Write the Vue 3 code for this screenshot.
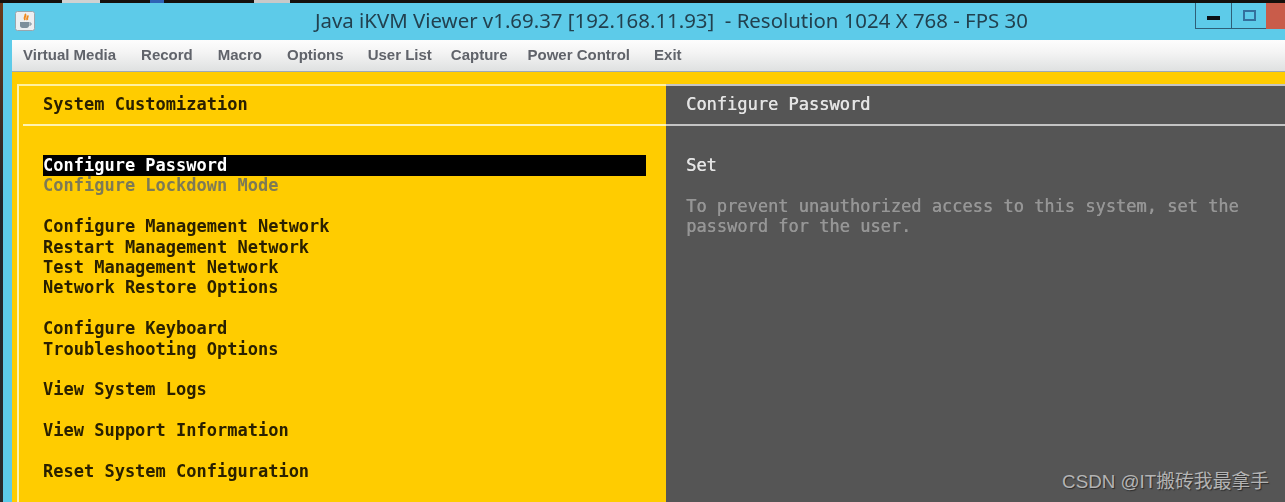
<script setup>
const menus = [
  { t: 'Virtual Media', c: '' },
  { t: 'Record', c: '' },
  { t: 'Macro', c: '' },
  { t: 'Options', c: 'near' },
  { t: 'User List', c: 'tight' },
  { t: 'Capture', c: 'snug' },
  { t: 'Power Control', c: 'near' },
  { t: 'Exit', c: '' }
]
const rows = [
  { t: 'Configure Password', c: 'sel' },
  { t: 'Configure Lockdown Mode', c: 'dim' },
  { t: '' },
  { t: 'Configure Management Network' },
  { t: 'Restart Management Network' },
  { t: 'Test Management Network' },
  { t: 'Network Restore Options' },
  { t: '' },
  { t: 'Configure Keyboard' },
  { t: 'Troubleshooting Options' },
  { t: '' },
  { t: 'View System Logs' },
  { t: '' },
  { t: 'View Support Information' },
  { t: '' },
  { t: 'Reset System Configuration' }
]
</script>

<template>
  <div class="page">
    <div class="desktop-strip">
      <span class="seg s1"></span><span class="seg s2"></span><span class="seg s3"></span>
    </div>
    <div class="window-wrap">
      <div class="desktop-edge"></div>
      <div class="window">
        <div class="titlebar">
          <svg class="app-icon" width="20" height="20" viewBox="0 0 20 20">
            <rect x="0.5" y="0.5" width="19" height="19" rx="2" fill="#eceff1" stroke="#9aa6ad" />
            <path d="M10 3c2 2-2 3 0 6M12.5 4.5c1 2-1.5 2.5 0 4.5" stroke="#f08a1d" stroke-width="2" fill="none" />
            <path d="M5 11h9v3.5c0 1.5-1 2.5-2.5 2.5h-4C6 17 5 16 5 14.5z" fill="#7d8f9b" />
            <path d="M14 12h2v2h-2" stroke="#7d8f9b" fill="none" />
          </svg>
          <div class="title">Java iKVM Viewer v1.69.37 [192.168.11.93]&nbsp; - Resolution 1024 X 768 - FPS 30</div>
          <div class="controls">
            <div class="ctl min"><i></i></div>
            <div class="ctl max"><i></i></div>
            <div class="ctl close"></div>
          </div>
        </div>
        <div class="client">
          <div class="menubar">
            <span v-for="m in menus" :key="m.t" class="menu" :class="m.c">{{ m.t }}</span>
          </div>
          <div class="screen">
            <div class="frame-top"></div>
            <div class="panes">
              <div class="pane left">
                <div class="head">System Customization</div>
                <div class="list">
                  <div v-for="(r, i) in rows" :key="i" class="row" :class="r.c">{{ r.t }}</div>
                </div>
              </div>
              <div class="pane right">
                <div class="head">Configure Password</div>
                <div class="list">
                  <div class="row">Set</div>
                  <div class="row"></div>
                  <div class="row muted">To prevent unauthorized access to this system, set the</div>
                  <div class="row muted">password for the user.</div>
                </div>
              </div>
            </div>
            <div class="watermark">CSDN @IT搬砖我最拿手</div>
          </div>
        </div>
      </div>
    </div>
  </div>
</template>

<style>
html, body { margin: 0; background: #555; overflow: hidden; }
</style>

<style scoped>
.page { width: 1285px; height: 502px; display: flex; flex-direction: column; overflow: hidden; background: #111; }
.desktop-strip { height: 3px; background: #14100c; display: flex; flex: none; }
.seg { display: block; height: 3px; }
.s1 { margin-left: 62px; width: 38px; background: #cfd2d2; }
.s2 { margin-left: 50px; width: 14px; background: #2f62b5; }
.s3 { margin-left: 90px; width: 36px; background: #c9c9c9; }
.window-wrap { flex: 1; display: flex; min-height: 0; }
.desktop-edge { width: 3px; flex: none; background: linear-gradient(#6b3a1a, #20242a 40%, #2a2a2a); }
.window { flex: 1; background: #5dcbe9; display: flex; flex-direction: column; min-width: 0; }
.titlebar { height: 37px; flex: none; display: flex; align-items: flex-start; position: relative; }
.app-icon { margin: 8px 0 0 12px; flex: none; filter: blur(0.6px); }
.title {
  font-family: "Noto Sans", sans-serif; font-size: 20.4px; line-height: 26px; color: #22414f;
  margin: 4px 0 0 280px; white-space: nowrap; filter: blur(0.4px);
}
.controls { position: absolute; right: 0; top: 0; display: flex; height: 26px; }
.ctl { box-sizing: border-box; height: 26px; border: 1px solid #2e5f78; border-top: 0; display: flex; align-items: center; justify-content: center; }
.min { width: 37px; padding-top: 4px; }
.min i { display: block; width: 13px; height: 4px; background: #0b1116; }
.max { width: 34px; border-left: 0; border-right: 0; }
.max i { display: block; box-sizing: border-box; width: 13px; height: 11px; border: 2px solid #33709c; }
.close { width: 19px; background: #c95c4a; border: 0; }
.client { flex: 1; margin-left: 9px; display: flex; flex-direction: column; min-height: 0; }
.menubar {
  height: 32px; flex: none; box-sizing: border-box; display: flex; align-items: center; padding: 0 0 3px 11px;
  background: linear-gradient(#fdfdfd, #f4f4f4 40%, #dfe1e1); border-bottom: 1px solid #9da9b5;
}
.menu { font-family: "Liberation Sans", sans-serif; font-size: 15px; font-weight: 700; color: #60636a; white-space: nowrap; margin-right: 25px; filter: blur(0.5px); }
.menu.near { margin-right: 24px; }
.menu.tight { margin-right: 19px; }
.menu.snug { margin-right: 20px; }
.screen { flex: 1; position: relative; background: #ffcc00; min-height: 0; }
.frame-top { height: 12px; }
.panes {
  display: flex; font-family: "DejaVu Sans Mono", "Liberation Mono", monospace; font-size: 17px; line-height: 20.4px; height: 100%;
}
.pane { box-sizing: border-box; }
.left { width: 654px; flex: none; margin-left: 5px; border-left: 2px solid #fff3b0; border-top: 2px solid #fff0a0; background: #ffcc00; color: #2a2000; font-weight: 700; }
.right { flex: 1; background: #555; border-top: 2px solid #c4c4c4; color: #e4e4e4; margin-left: -5px; position: relative; }
.head { height: 40px; box-sizing: border-box; padding: 8px 0 0 24px; border-bottom: 2px solid #fff3b0; white-space: pre; filter: blur(0.45px); }
.left .head { margin-left: 4px; padding-left: 20px; }
.right .head { padding-left: 20px; border-bottom-color: #c4c4c4; text-shadow: 0.4px 0 0 currentColor; }
.list { padding: 29px 25px 0 24px; filter: blur(0.45px); }
.right .list { padding-left: 20px; padding-right: 0; font-weight: 400; text-shadow: 0.4px 0 0 currentColor; }
.row { height: 20.4px; white-space: pre; }
.sel { background: #000; color: #fff; box-shadow: 0 1px 0 #000; }
.dim { color: #7e7a55; }
.muted { color: #969696; }
.watermark {
  position: absolute; right: 16px; bottom: 9px; font-family: "Liberation Sans", "Noto Sans CJK SC", sans-serif; font-size: 18.8px; line-height: 22px;
  color: #b4b4b4; text-shadow: 1px 1px 1px #2c2c2c;
}
</style>
